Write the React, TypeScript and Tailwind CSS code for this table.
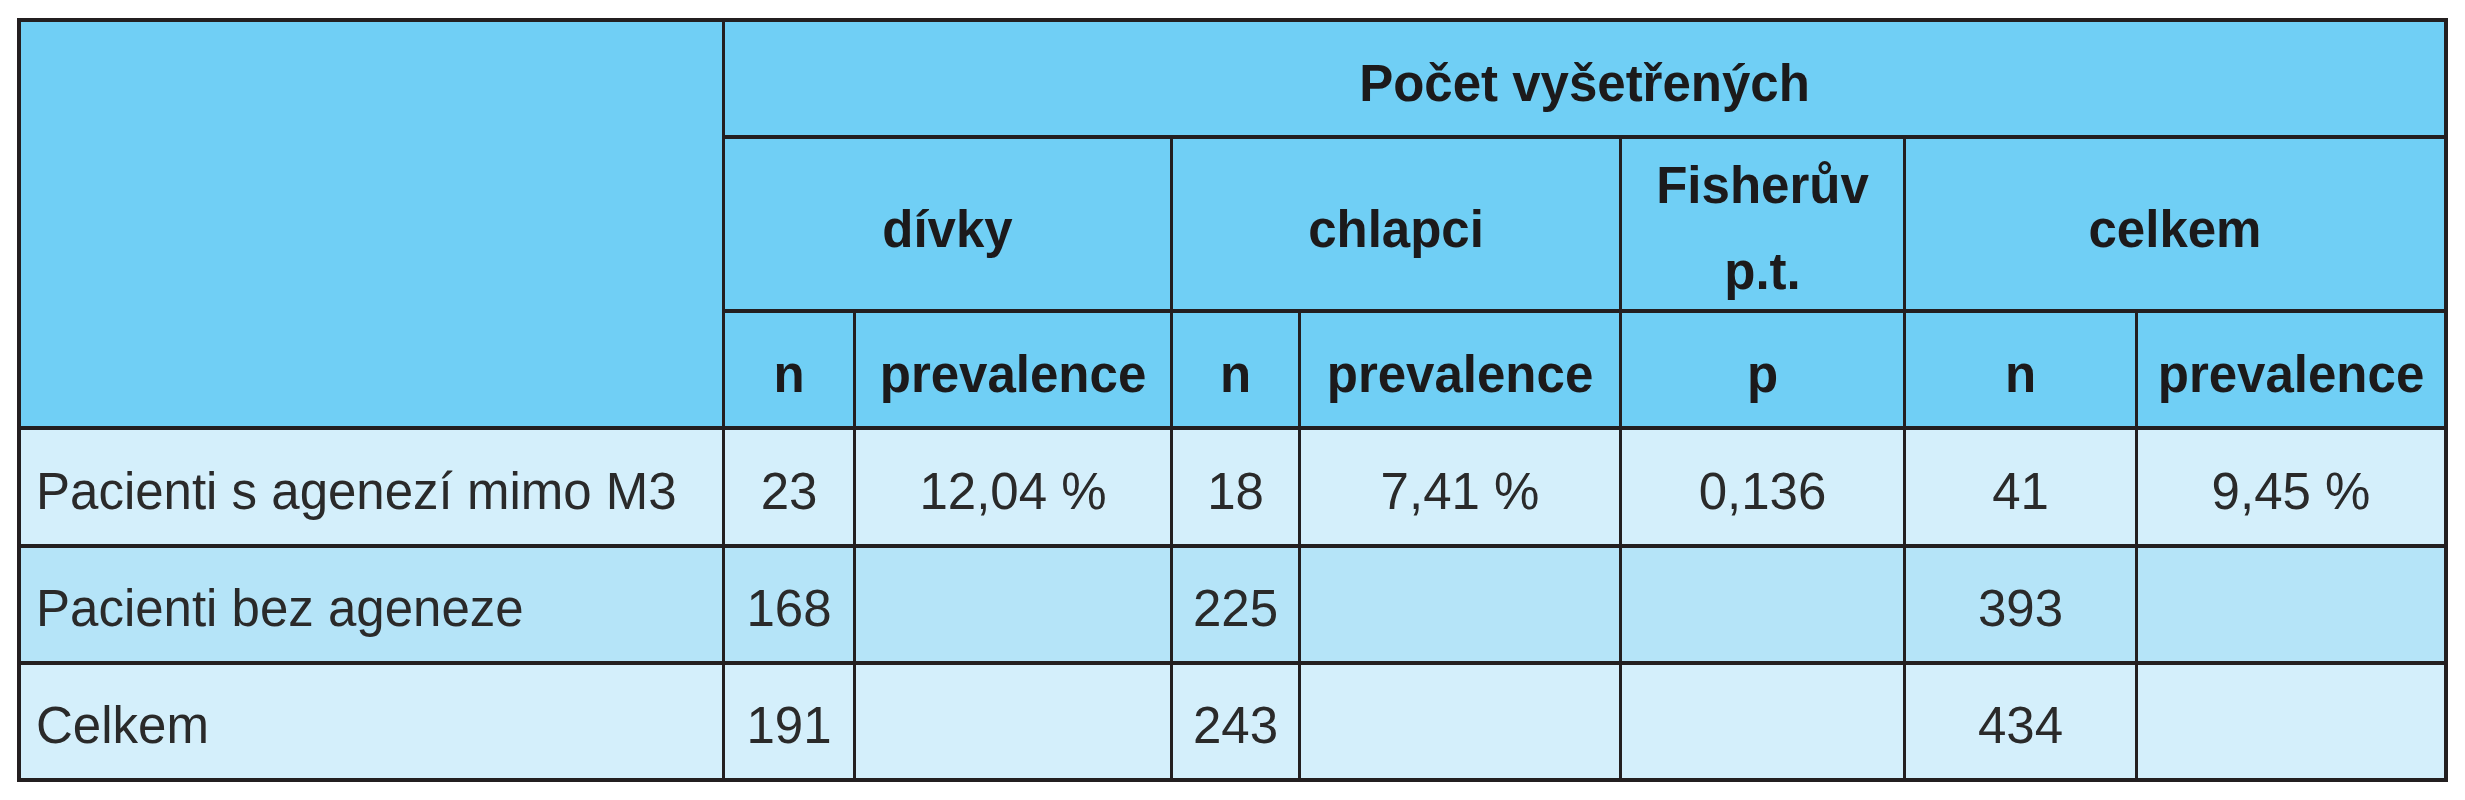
import type React from 'react';

const line = 'border-[#231f20]';
const head = `bg-[#70cff5] border-b-4 border-r-[3px] ${line} flex items-center justify-center pt-[10px] font-bold text-[#1c1a1b]`;
const light = 'bg-[#d4effb]';
const mid = 'bg-[#b5e4f8]';

type Row = {
  label: string;
  cells: string[];
  bg: string;
};

const rows: Row[] = [
  {
    label: 'Pacienti s agenezí mimo M3',
    cells: ['23', '12,04 %', '18', '7,41 %', '0,136', '41', '9,45 %'],
    bg: light,
  },
  { label: 'Pacienti bez ageneze', cells: ['168', '', '225', '', '', '393', ''], bg: mid },
  { label: 'Celkem', cells: ['191', '', '243', '', '', '434', ''], bg: light },
];

const Cell: React.FC<{ bg: string; last?: boolean; left?: boolean; children?: React.ReactNode }> = ({
  bg,
  last,
  left,
  children,
}) => (
  <div
    className={`${bg} border-b-4 ${last ? 'border-r-4' : 'border-r-[3px]'} ${line} flex items-center pt-[8px] text-[#2a2a2a] ${
      left ? 'justify-start pl-[15px]' : 'justify-center'
    }`}
  >
    {children}
  </div>
);

export default function App() {
  return (
    <div className="w-[2465px] h-[800px] bg-white pt-[18px] pl-[17px] font-['Liberation_Sans',Arial,sans-serif] text-[51px] leading-none">
      <div
        className={`grid w-fit grid-cols-[704px_131px_317px_128px_321px_284px_232px_310px] grid-rows-[117px_174px_117px_118px_117px_117px] border-t-4 border-l-4 ${line}`}
      >
        {/* header */}
        <div className={`row-span-3 ${head}`} />
        <div className={`col-span-7 ${head} !border-r-4`}>Počet vyšetřených</div>

        <div className={`col-span-2 ${head}`}>dívky</div>
        <div className={`col-span-2 ${head}`}>chlapci</div>
        <div className={`${head} flex-col leading-[86px]`}>
          <span>Fisherův</span>
          <span>p.t.</span>
        </div>
        <div className={`col-span-2 ${head} !border-r-4`}>celkem</div>

        <div className={head}>n</div>
        <div className={head}>prevalence</div>
        <div className={head}>n</div>
        <div className={head}>prevalence</div>
        <div className={head}>p</div>
        <div className={head}>n</div>
        <div className={`${head} !border-r-4`}>prevalence</div>

        {/* body */}
        {rows.map((row) => (
          <div key={row.label} className="contents">
            <Cell bg={row.bg} left>
              {row.label}
            </Cell>
            {row.cells.map((value, i) => (
              <Cell key={i} bg={row.bg} last={i === row.cells.length - 1}>
                {value}
              </Cell>
            ))}
          </div>
        ))}
      </div>
    </div>
  );
}
